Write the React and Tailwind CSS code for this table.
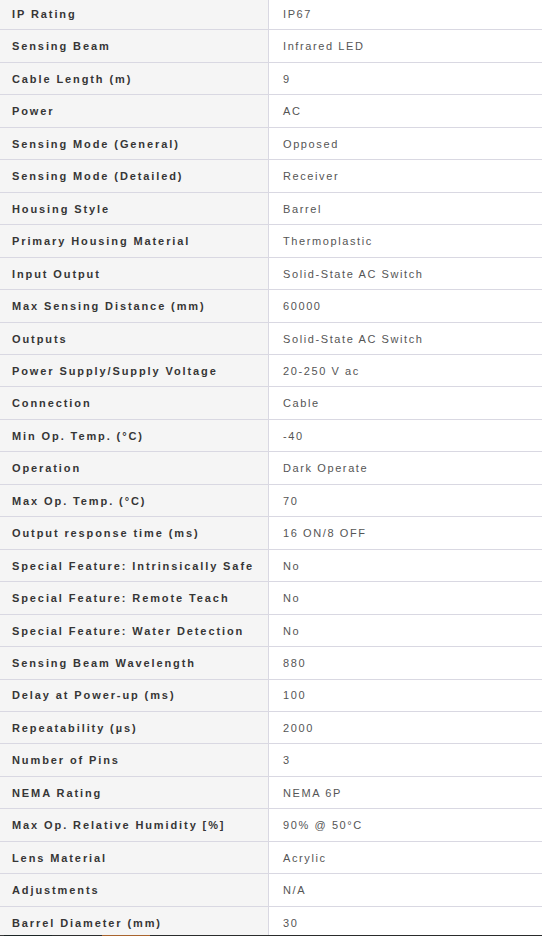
import React from "react";

const specs = [
  ["IP Rating", "IP67"],
  ["Sensing Beam", "Infrared LED"],
  ["Cable Length (m)", "9"],
  ["Power", "AC"],
  ["Sensing Mode (General)", "Opposed"],
  ["Sensing Mode (Detailed)", "Receiver"],
  ["Housing Style", "Barrel"],
  ["Primary Housing Material", "Thermoplastic"],
  ["Input Output", "Solid-State AC Switch"],
  ["Max Sensing Distance (mm)", "60000"],
  ["Outputs", "Solid-State AC Switch"],
  ["Power Supply/Supply Voltage", "20-250 V ac"],
  ["Connection", "Cable"],
  ["Min Op. Temp. (°C)", "-40"],
  ["Operation", "Dark Operate"],
  ["Max Op. Temp. (°C)", "70"],
  ["Output response time (ms)", "16 ON/8 OFF"],
  ["Special Feature: Intrinsically Safe", "No"],
  ["Special Feature: Remote Teach", "No"],
  ["Special Feature: Water Detection", "No"],
  ["Sensing Beam Wavelength", "880"],
  ["Delay at Power-up (ms)", "100"],
  ["Repeatability (µs)", "2000"],
  ["Number of Pins", "3"],
  ["NEMA Rating", "NEMA 6P"],
  ["Max Op. Relative Humidity [%]", "90% @ 50°C"],
  ["Lens Material", "Acrylic"],
  ["Adjustments", "N/A"],
  ["Barrel Diameter (mm)", "30"],
];

const SpecRow = ({ label, value }) => (
  <div className="flex h-[32.46px] border-b border-[#d9d8e2]">
    <div className="w-[269px] shrink-0 bg-[#f5f5f5] border-r border-[#d9d8e2] flex items-center pl-3 pt-px text-[11px] font-bold tracking-[1.9px] text-[#363636]">
      {label}
    </div>
    <div className="flex-1 bg-white flex items-center pl-[14px] pt-px text-[11px] tracking-[1.6px] text-[#555]">
      {value}
    </div>
  </div>
);

export default function App() {
  return (
    <div
      className="w-[542px] h-[936px] overflow-hidden bg-white"
      style={{ fontFamily: '"Liberation Sans", Arial, sans-serif' }}
    >
      <div className="h-[935px] overflow-hidden">
        <div className="mt-[-2px]">
          {specs.map(([label, value]) => (
            <SpecRow key={label} label={label} value={value} />
          ))}
        </div>
      </div>
      <div className="flex h-px">
        <div className="w-[4px] bg-[#3a3a3a]" />
        <div className="w-[48px] bg-[#1c2626]" />
        <div className="w-[50px] bg-[#2c2e2e]" />
        <div className="w-[48px] bg-[#a8642e]" />
        <div className="flex-1 bg-[#2a2c2c]" />
      </div>
    </div>
  );
}
